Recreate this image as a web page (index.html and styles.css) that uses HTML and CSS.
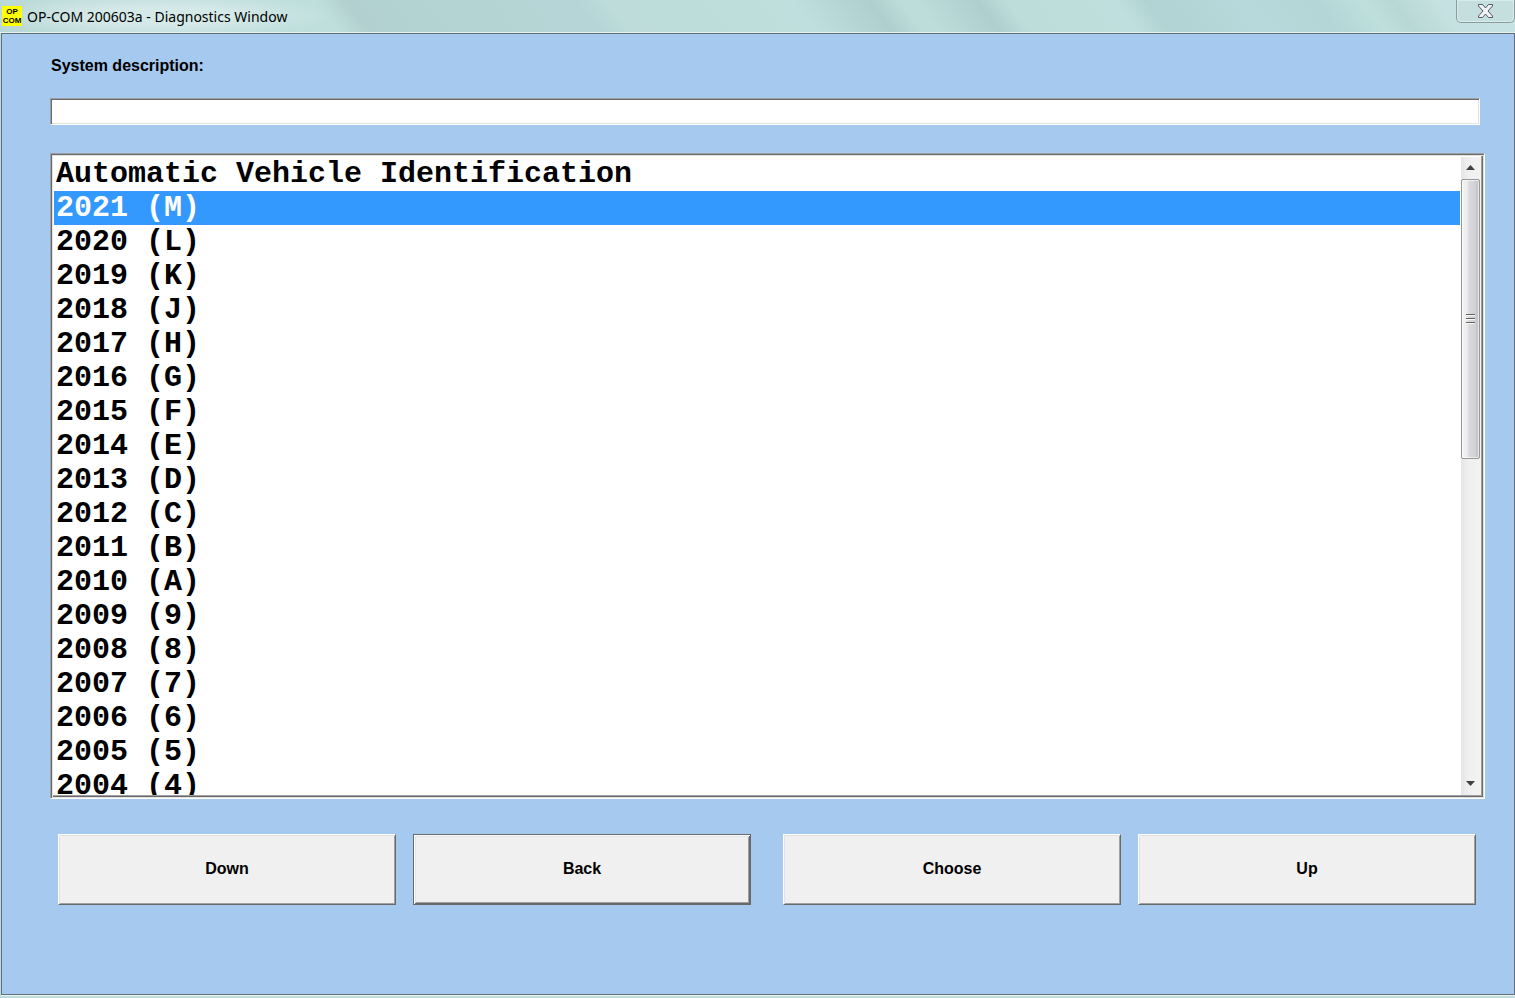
FILE: index.html
```html
<!DOCTYPE html>
<html lang="en">
<head>
<meta charset="UTF-8">
<title>OP-COM 200603a - Diagnostics Window</title>
<link rel="stylesheet" href="styles.css">
</head>
<body>
<div class="window">
  <header class="titlebar">
    <div class="app-icon"><span>OP</span><span>COM</span></div>
    <h1 class="title">OP-COM 200603a - Diagnostics Window</h1>
    <button type="button" class="close" aria-label="Close">
      <svg width="17" height="14" viewBox="0 0 17 14">
        <path d="M1.5 .5H5.5L8.5 4L11.5 .5H15.5V2L11 7L15.500 12V13.500H11.500L8.500 10L5.500 13.500H1.500V12L6 7L1.500 2Z" fill="#f1f3f4" stroke="#535666" stroke-linejoin="round"/>
      </svg>
    </button>
  </header>
  <main class="client">
    <label class="field-label" for="description">System description:</label>
    <input class="description" id="description" type="text">
    <div class="list">
      <select class="years" size="10" aria-label="Model year">
        <option>Automatic Vehicle Identification</option>
        <option selected>2021 (M)</option>
        <option>2020 (L)</option>
        <option>2019 (K)</option>
        <option>2018 (J)</option>
        <option>2017 (H)</option>
        <option>2016 (G)</option>
        <option>2015 (F)</option>
        <option>2014 (E)</option>
        <option>2013 (D)</option>
        <option>2012 (C)</option>
        <option>2011 (B)</option>
        <option>2010 (A)</option>
        <option>2009 (9)</option>
        <option>2008 (8)</option>
        <option>2007 (7)</option>
        <option>2006 (6)</option>
        <option>2005 (5)</option>
        <option>2004 (4)</option>
      </select>
      <div class="scrollbar">
        <button type="button" class="arrow" aria-label="Scroll up">
          <svg width="9" height="5" viewBox="0 0 9 5"><path d="M0 5L4.500 0L9 5Z" fill="#404040"/></svg>
        </button>
        <div class="track">
          <div class="thumb">
            <svg width="9" height="10" viewBox="0 0 9 10" shape-rendering="crispEdges">
              <path d="M0 .5H9M0 4.500H9M0 8.500H9" stroke="#606060"/>
              <path d="M0 1.500H9M0 5.500H9M0 9.500H9" stroke="#fafafa"/>
            </svg>
          </div>
        </div>
        <button type="button" class="arrow" aria-label="Scroll down">
          <svg width="9" height="5" viewBox="0 0 9 5"><path d="M0 0L4.500 5L9 0Z" fill="#404040"/></svg>
        </button>
      </div>
    </div>
    <div class="actions">
      <div class="pair">
        <button type="button" class="action">Down</button>
        <button type="button" class="action default">Back</button>
      </div>
      <div class="pair">
        <button type="button" class="action">Choose</button>
        <button type="button" class="action">Up</button>
      </div>
    </div>
  </main>
</div>
</body>
</html>
```

FILE: styles.css
```css
* {
  box-sizing: border-box;
}
body {
  margin: 0;
  font-family: "Liberation Sans", Arial, sans-serif;
  font-size: 16px;
  color: #000;
}
.window {
  display: flex;
  flex-direction: column;
  min-height: 100vh;
  padding: 0 0 3px 1px;
  background: #bddcda;
}

/* title bar */
.titlebar {
  display: flex;
  align-items: center;
  height: 33px;
  margin-left: -1px;
  padding-left: 2px;
  border-bottom: 1px solid #e4f2f0;
  background:
    radial-gradient(ellipse 170px 22px at 160px 16px, rgba(255, 255, 255, 0.35) 40%, rgba(255, 255, 255, 0) 100%),
    linear-gradient(53deg, #b8d8d6 0%, #bddcda 5%, #bfdfdd 22%, #b1d0cf 24%, #b5d5d5 34%,
      #b5d5d7 39%, #bddcda 41%, #bedfdd 53%, #aecfce 58%, #bddddb 60%,
      #bddddb 61%, #aecfce 65%, #bddddb 67%, #bedfdd 74%, #b2d3d3 76%,
      #b7d9db 82%, #b4d6d7 87%, #bedfdc 90%, #b8d8d6 92%, #c6e1e1 95%, #c8e3e3 100%);
}
.app-icon {
  display: flex;
  flex-direction: column;
  align-items: center;
  justify-content: center;
  width: 20px;
  height: 20px;
  background: #ff0;
  font-size: 8px;
  font-weight: bold;
  line-height: 9px;
}
.title {
  flex: 1;
  margin: 0 0 0 5px;
  font-family: "Segoe UI", "Noto Sans", sans-serif;
  font-size: 14px;
  font-weight: normal;
}
.close {
  display: flex;
  align-items: center;
  justify-content: center;
  align-self: flex-start;
  width: 59px;
  height: 23px;
  padding: 0;
  border: 1px solid #8a9c9f;
  border-top: 0;
  border-radius: 0 0 5px 5px;
  background: #c5dfdf;
  box-shadow: inset 0 0 0 1px #d9ecec;
}

/* window contents */
.client {
  flex: 1;
  display: flex;
  flex-direction: column;
  padding: 20px 29px 89px 48px;
  border: 1px solid #5f7177;
  background: #a6c9ef;
  box-shadow: 0 1px 0 #f0f8f7;
}
.field-label {
  padding-left: 1px;
  font-weight: bold;
  line-height: 24px;
}
.description {
  height: 27px;
  margin: 20px 5px 28px 0;
  padding: 0 4px;
  border: 1px solid;
  border-color: #a0a0a0 #fff #fff #a0a0a0;
  border-radius: 0;
  background: #fff;
  box-shadow: inset 1px 1px 0 #696969, inset -1px -1px 0 #e3e3e3;
  font: inherit;
}

/* list with its scrollbar: sunken edge outside, raised edge inside */
.list {
  flex: 1;
  display: flex;
  padding: 3px;
  border: 1px solid;
  border-color: #a0a0a0 #fff #fff #a0a0a0;
  background: #fff;
  box-shadow:
    inset 1px 1px 0 #696969,
    inset -1px -1px 0 #e3e3e3,
    inset 2px 2px 0 #e3e3e3,
    inset -2px -2px 0 #696969,
    inset -3px -3px 0 #a0a0a0;
}
.years {
  flex: 1;
  min-width: 0;
  padding: 0;
  border: 0;
  border-radius: 0;
  outline: none;
  background: #fff;
  color: #000;
  font-family: "Courier New", "Liberation Mono", monospace;
  font-size: 30px;
  overflow: hidden;
}
.years option {
  height: 34px;
  min-height: 0;
  padding: 0 2px;
  font-weight: bold;
  line-height: 34px;
}
.years option:checked {
  background: #39f linear-gradient(#39f, #39f);
  color: #fff;
}
.scrollbar {
  display: flex;
  flex-direction: column;
  width: 21px;
  padding-right: 1px;
  border-left: 1px solid #fff;
  background: linear-gradient(90deg, #e6e6e6, #f0f0f0 40%, #f2f2f2);
}
.arrow {
  display: flex;
  align-items: center;
  justify-content: center;
  height: 22px;
  padding: 0 1px 1px 0;
  border: 0;
  background: none;
}
.track {
  flex: 1;
}
.thumb {
  display: flex;
  align-items: center;
  justify-content: center;
  height: 280px;
  border: 1px solid #979797;
  border-radius: 2px;
  background: linear-gradient(90deg, #f5f5f5, #e9e9eb 35%, #d9dadc 40%, #d4d4d8 70%, #c0c0c4);
  box-shadow: inset 0 0 0 1px rgba(255, 255, 255, 0.6);
}

/* bottom buttons */
.actions {
  display: flex;
  gap: 32px;
  margin: 35px 9px 0 8px;
}
.pair {
  flex: 1;
  display: flex;
  gap: 17px;
}
.action {
  flex: 1;
  height: 71px;
  padding: 0 0 2px;
  border: 1px solid;
  border-color: #fff #696969 #696969 #fff;
  border-radius: 0;
  background: #f0f0f0;
  box-shadow: inset 1px 1px 0 #e3e3e3, inset -1px -1px 0 #a0a0a0;
  color: #000;
  font: bold 16px "Liberation Sans", Arial, sans-serif;
}
.action.default {
  border-color: #696969;
  box-shadow:
    inset 1px 1px 0 #fff,
    inset -1px -1px 0 #696969,
    inset 2px 2px 0 #e3e3e3,
    inset -2px -2px 0 #a0a0a0;
}
```
